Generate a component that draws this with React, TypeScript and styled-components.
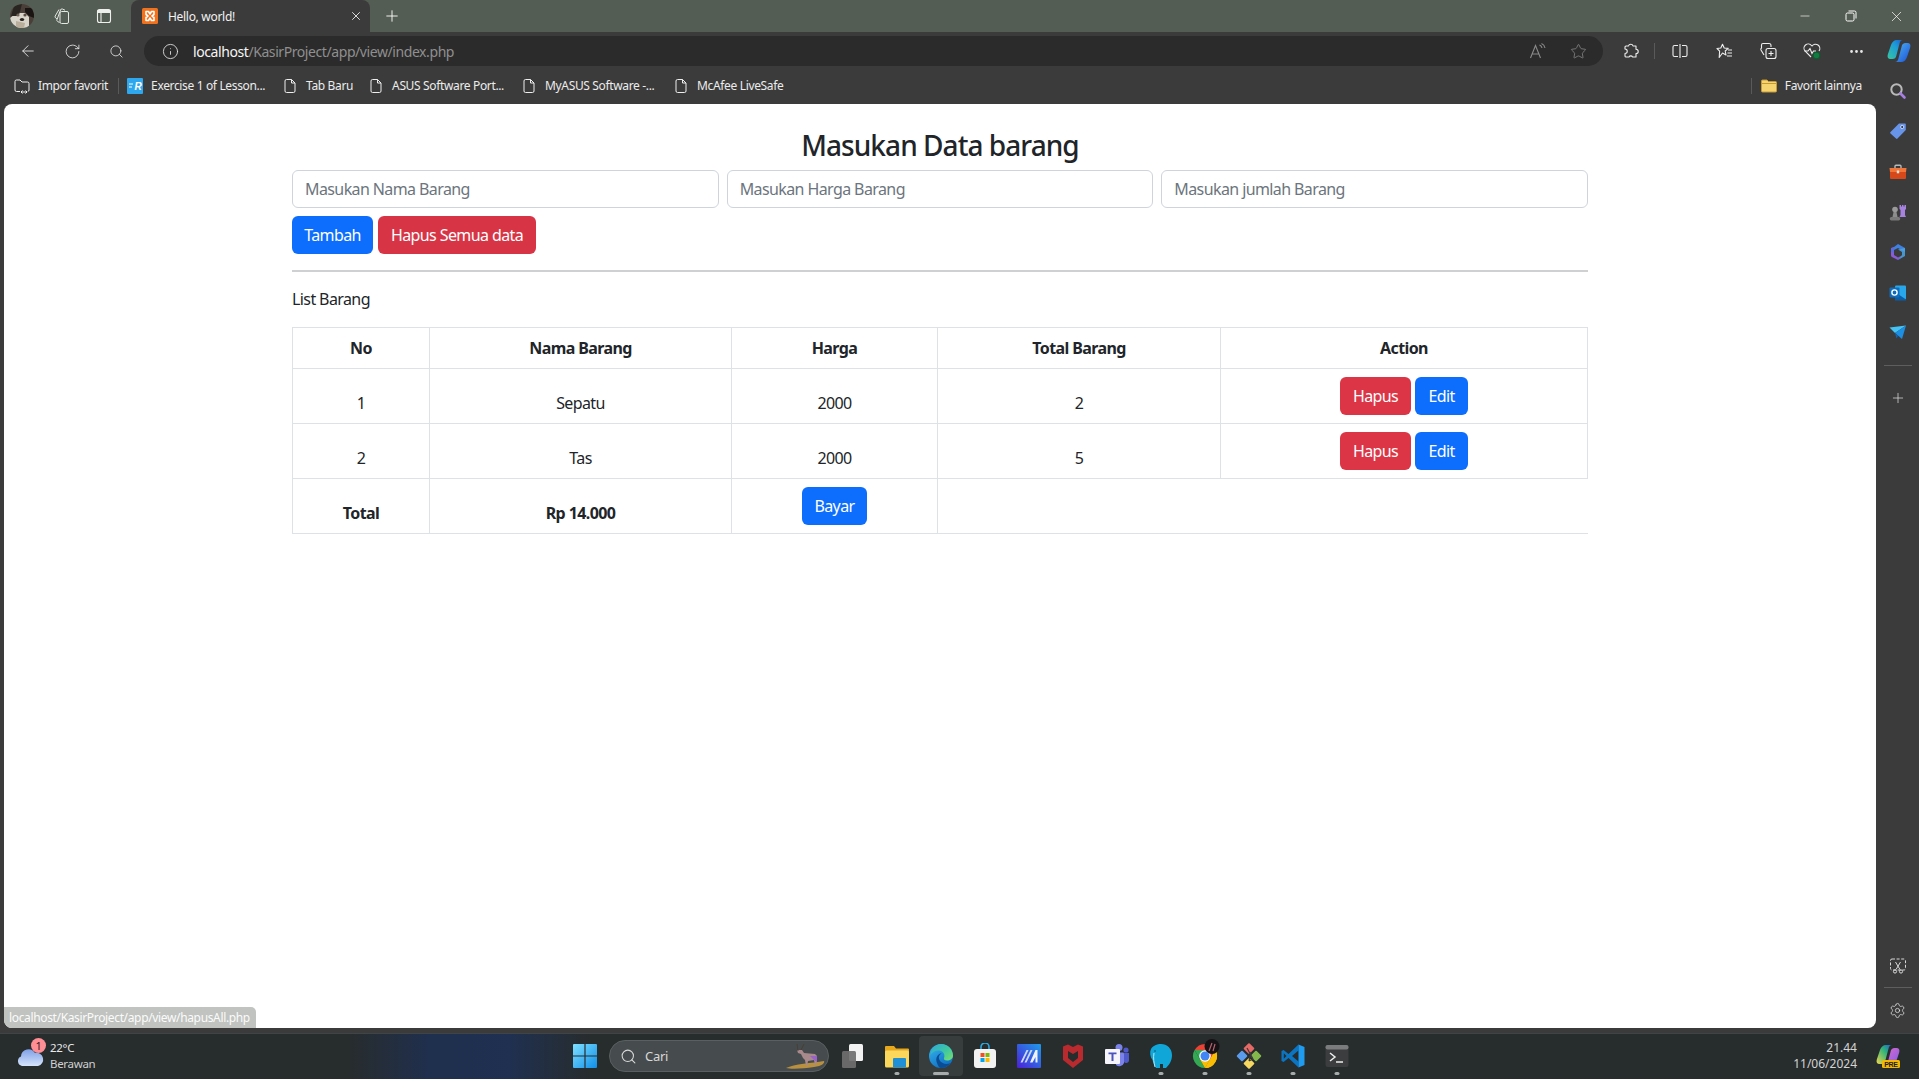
import React from 'react';
import styled, { createGlobalStyle } from 'styled-components';
import { ArrowLeft, RotateCw, Search, Info, Star, X, Plus, Minus, Settings, Ellipsis } from 'lucide-react';

const SANS = `"Noto Sans", "Open Sans", "Liberation Sans", sans-serif`;

const GlobalStyle = createGlobalStyle`
  html, body { margin: 0; padding: 0; height: 100%; overflow: hidden; background: #3b3b3b; }
  * { box-sizing: border-box; }
  body { font-family: ${SANS}; letter-spacing: -0.3px; color: #212529; }
`;

const Screen = styled.div`
  display: flex;
  flex-direction: column;
  width: 1919px;
  height: 1079px;
  background: #3b3b3b;
`;

const TabStrip = styled.div`
  display: flex;
  align-items: center;
  height: 32px;
  background: #545d53;
  color: #fff;
`;

const Slot = styled.div<{ $w?: number; $h?: number }>`
  display: flex;
  flex: none;
  align-items: center;
  justify-content: center;
  width: ${({ $w }) => $w ?? 44}px;
  height: ${({ $h }) => ($h ? `${$h}px` : '100%')};
`;

const Tab = styled.div`
  display: flex;
  flex: none;
  align-items: center;
  width: 239px;
  height: 32px;
  margin-left: 3px;
  padding: 0 7px 0 11px;
  gap: 10px;
  background: #3b3b3b;
  border-radius: 8px 8px 0 0;
  font-size: 12px;
`;

const TabTitle = styled.span`
  flex: 1;
  color: #f2f2f2;
`;

const Push = styled.div`
  flex: 1;
`;

const Toolbar = styled.div`
  display: flex;
  align-items: center;
  height: 38px;
  padding-left: 6px;
  color: #e6e6e6;
`;

const Address = styled.div`
  display: flex;
  flex: none;
  align-items: center;
  width: 1459px;
  height: 30px;
  margin: 0 6px;
  padding: 0 5px 0 8px;
  background: #2b2b2b;
  border-radius: 15px;
  font-size: 14px;
  letter-spacing: -0.42px;
`;

const UrlHost = styled.span`
  margin-left: 5px;
  color: #f5f5f5;
`;

const UrlPath = styled.span`
  color: #8f8f8f;
`;

const Divider = styled.div`
  flex: none;
  width: 1px;
  height: 16px;
  margin: 0 3px 0 1px;
  background: #5a5a5a;
`;

const Body = styled.div`
  display: flex;
  flex: 1;
  min-height: 0;
`;

const Left = styled.div`
  display: flex;
  flex: 1;
  flex-direction: column;
  min-width: 0;
`;

const Bookmarks = styled.div`
  display: flex;
  flex: none;
  align-items: center;
  height: 34px;
  padding: 0 14px 3px;
  color: #ececec;
  font-size: 12px;
  letter-spacing: -0.35px;
`;

const Bookmark = styled.div<{ $w?: number }>`
  display: flex;
  flex: none;
  align-items: center;
  gap: 8px;
  width: ${({ $w }) => ($w ? `${$w}px` : 'auto')};
  white-space: nowrap;
`;

const BarRule = styled.div<{ $ml: number; $mr: number }>`
  flex: none;
  width: 1px;
  height: 16px;
  margin-left: ${({ $ml }) => $ml}px;
  margin-right: ${({ $mr }) => $mr}px;
  background: #5a5a5a;
`;

const Page = styled.main`
  position: relative;
  flex: 1;
  margin: 0 0 5px 4px;
  background: #fff;
  border-radius: 8px;
  letter-spacing: -0.6px;
`;

const Container = styled.div`
  width: 1320px;
  margin: 0 auto;
  padding: 0 12px;
`;

const Title = styled.h3`
  margin: 0;
  padding-top: 24px;
  height: 66px;
  color: #212529;
  font-size: 28px;
  font-weight: 500;
  line-height: 34px;
  text-align: center;
  letter-spacing: -0.95px;
`;

const InputRow = styled.div`
  display: grid;
  grid-template-columns: repeat(3, 1fr);
  gap: 8px;
`;

const Field = styled.input`
  height: 38px;
  padding: 6px 12px;
  border: 1px solid #ced4da;
  border-radius: 6px;
  background: #fff;
  font-family: ${SANS};
  font-size: 16px;
  letter-spacing: -0.6px;

  &::placeholder {
    color: #6c757d;
    opacity: 1;
  }
`;

const ButtonRow = styled.div`
  display: flex;
  gap: 5px;
  margin-top: 8px;
`;

const Button = styled.button<{ $tone: 'primary' | 'danger' | 'dangerHover'; $w: number }>`
  width: ${({ $w }) => $w}px;
  height: 38px;
  padding: 0;
  border: 0;
  border-radius: 6px;
  background: ${({ $tone }) =>
    $tone === 'primary' ? '#0d6efd' : $tone === 'danger' ? '#dc3545' : '#d73546'};
  color: #fff;
  font-family: ${SANS};
  font-size: 16px;
  letter-spacing: -0.6px;
`;

const Rule = styled.hr`
  margin: 16px 0 0;
  border: 0;
  border-top: 2px solid #cfd0d1;
`;

const ListLabel = styled.p`
  margin: 15px 0 16px;
  font-size: 16px;
  line-height: 24px;
`;

const Table = styled.table`
  width: 1296px;
  table-layout: fixed;
  border-collapse: collapse;
  font-size: 16px;
`;

const Row = styled.tr`
  border-top: 1px solid #dee2e6;
  border-bottom: 1px solid #dee2e6;
`;

const Head = styled.th<{ $w?: number }>`
  width: ${({ $w }) => ($w ? `${$w}px` : 'auto')};
  padding: 8px;
  border-left: 1px solid #dee2e6;
  border-right: 1px solid #dee2e6;
  font-weight: 700;
  line-height: 24px;
  text-align: center;
`;

const Cell = styled.td<{ $bold?: boolean; $open?: boolean }>`
  padding: 8px;
  border-left: 1px solid #dee2e6;
  border-right: ${({ $open }) => ($open ? '0' : '1px solid #dee2e6')};
  font-weight: ${({ $bold }) => ($bold ? 700 : 400)};
  line-height: 24px;
  text-align: center;
  vertical-align: bottom;
`;

const Actions = styled.div`
  display: flex;
  justify-content: center;
  gap: 4px;
`;

const StatusBubble = styled.div`
  position: absolute;
  left: 0;
  bottom: 0;
  width: 252px;
  height: 21px;
  padding: 0 5px;
  background: #c0c3bf;
  border-radius: 0 5px 0 8px;
  color: #fbfbfb;
  font-size: 12px;
  line-height: 21px;
  letter-spacing: -0.35px;
  white-space: nowrap;
`;

const Sidebar = styled.aside`
  display: flex;
  flex: none;
  flex-direction: column;
  align-items: center;
  width: 43px;
  padding: 1px 0 3px;
  color: #e0e0e0;
`;

const SideRule = styled.div<{ $mt: number; $mb: number }>`
  flex: none;
  width: 28px;
  height: 1px;
  margin-top: ${({ $mt }) => $mt}px;
  margin-bottom: ${({ $mb }) => $mb}px;
  background: #5e5e5e;
`;

const SideBottom = styled.div`
  display: flex;
  flex-direction: column;
  align-items: center;
  margin-top: auto;
`;

const Taskbar = styled.footer`
  display: flex;
  flex: none;
  align-items: center;
  height: 46px;
  padding-bottom: 1px;
  border-top: 1px solid #3f4546;
  background: linear-gradient(90deg, #272c2d 0, #272c2d 350px, #1f2f4e 430px, #1f3050 510px, #272c2d 590px);
  color: #e8e8e8;
`;

const Weather = styled.div`
  display: flex;
  flex: none;
  align-items: center;
  gap: 6px;
  width: 563px;
  padding-left: 15px;
`;

const WeatherIcon = styled.div`
  position: relative;
  width: 30px;
  height: 30px;
`;

const WeatherBadge = styled.span`
  position: absolute;
  top: -3px;
  right: -1px;
  width: 15px;
  height: 15px;
  background: #ff8f95;
  border-radius: 50%;
  color: #3a1518;
  font-size: 11px;
  line-height: 15px;
  text-align: center;
`;

const WeatherText = styled.div`
  margin-left: -1px;
  font-size: 11.5px;
  line-height: 16px;
`;

const WeatherSub = styled.div`
  color: #cfcfcf;
`;

const SearchPill = styled.div`
  display: flex;
  flex: none;
  align-items: center;
  gap: 8px;
  width: 220px;
  height: 32px;
  margin: 0 2px;
  padding: 0 0 0 10px;
  background: #464c4d;
  border: 1px solid #5a6061;
  border-radius: 16px;
  color: #d8d8d8;
  font-size: 13px;
`;

const TaskItem = styled.div<{ $active?: boolean; $dot?: boolean }>`
  position: relative;
  display: flex;
  flex: none;
  align-items: center;
  justify-content: center;
  width: 44px;
  height: 40px;
  border-radius: 4px;
  background: ${({ $active }) => ($active ? 'rgba(255,255,255,0.08)' : 'transparent')};

  &::after {
    content: '';
    display: ${({ $dot, $active }) => ($dot || $active ? 'block' : 'none')};
    position: absolute;
    left: 50%;
    bottom: 1px;
    width: ${({ $active }) => ($active ? 16 : 5)}px;
    height: 3px;
    transform: translateX(-50%);
    border-radius: 2px;
    background: #a8abab;
  }
`;

const Clock = styled.div`
  flex: none;
  color: #d4d4d4;
  font-size: 12px;
  line-height: 16px;
  letter-spacing: 0;
  text-align: right;
`;

const Avatar = () => (
  <svg width="24" height="24" viewBox="0 0 24 24">
    <defs><clipPath id="av"><circle cx="12" cy="12" r="12" /></clipPath></defs>
    <g clipPath="url(#av)">
      <rect width="24" height="24" fill="#4a4039" />
      <path d="M0 24 V14 C3 11 5 11 7 12 L10 9 H15 L19 13 V24Z" fill="#d9d4ca" />
      <path d="M4 2 L12 0 L10 8 L6 12 L1 12Z" fill="#2a2420" />
      <path d="M15 4 H24 V14 L19 12 L15 8Z" fill="#1a1512" />
      <circle cx="8" cy="11" r="1.6" fill="#6f6256" />
      <circle cx="15" cy="11" r="1.6" fill="#5a4d42" />
      <ellipse cx="12" cy="15.5" rx="2.2" ry="1.6" fill="#2a2420" />
      <path d="M6 17 L15 19 L14 24 H6Z" fill="#b9ae9c" />
    </g>
  </svg>
);

const CollectionsTab = () => (
  <svg width="18" height="18" viewBox="0 0 18 18" fill="none" stroke="#e4e8e4" strokeWidth="1">
    <rect x="7" y="4.5" width="8.5" height="12" rx="1.5" />
    <path d="M6.5 15.5 L4.6 14.5 A1.5 1.5 0 0 1 4 12.6 L7.5 3 A1.5 1.5 0 0 1 9.4 2 L12 3.2" />
    <path d="M4 12 L2.5 10.8 A1.5 1.5 0 0 1 2.2 9 L6 2.5" />
  </svg>
);

const TabActions = () => (
  <svg width="16" height="16" viewBox="0 0 16 16" fill="none" stroke="#eef0ee" strokeWidth="1.1">
    <rect x="1.5" y="1.5" width="13" height="13" rx="2" />
    <path d="M1.5 3.5 H14.5" strokeWidth="3" />
    <path d="M5 5 V14.5" />
  </svg>
);

const XamppLogo = () => (
  <svg width="16" height="16" viewBox="0 0 16 16">
    <rect width="16" height="16" rx="1.5" fill="#f2711c" />
    <path d="M4 3.5 H6.5 L8 6 L9.5 3.5 H12 V6.5 L10 8 L12 9.5 V12.5 H9.5 L8 10 L6.5 12.5 H4 V9.5 L6 8 L4 6.5Z" fill="none" stroke="#fff" strokeWidth="1.6" strokeLinejoin="round" />
  </svg>
);

const ReadAloud = () => (
  <svg width="18" height="18" viewBox="0 0 18 18" fill="none" stroke="#8a8a8a" strokeWidth="1.1">
    <path d="M1.5 16 L6.5 3.5 L11.5 16 M3.2 12 H9.8" />
    <path d="M10.5 3 A4 4 0 0 1 13 6 M12.5 1.5 A6 6 0 0 1 16 6" />
  </svg>
);

const Puzzle = () => (
  <svg width="16" height="16" viewBox="0 0 16 16" fill="none" stroke="#eee" strokeWidth="1.1" strokeLinejoin="round">
    <path d="M5.5 3 A2.3 2.3 0 0 1 10 3 H13 V6.2 A2.2 2.2 0 0 1 13 10.6 V14 H9.6 A2 2 0 0 0 6 14 H2.8 A1 1 0 0 1 2 13 V10.5 A2.2 2.2 0 0 0 2 6 V4 A1 1 0 0 1 3 3Z" />
  </svg>
);

const SplitScreen = () => (
  <svg width="16" height="16" viewBox="0 0 16 16" fill="none" stroke="#eee" strokeWidth="1.1">
    <path d="M6 2.5 H2.5 A1.5 1.5 0 0 0 1 4 V12 A1.5 1.5 0 0 0 2.5 13.5 H6" />
    <path d="M10 2.5 H13.5 A1.5 1.5 0 0 1 15 4 V12 A1.5 1.5 0 0 1 13.5 13.5 H10" />
    <path d="M8 1 V15" />
  </svg>
);

const FavoritesIcon = () => (
  <svg width="17" height="16" viewBox="0 0 17 16" fill="none" stroke="#eee" strokeWidth="1.1" strokeLinejoin="round">
    <path d="M6.5 1.2 L8.2 5 L12.2 5.4 L9.2 8 L10 12 L6.5 10 L3.2 14.5 L3.6 8.2 L1 5.5 L4.8 5Z" />
    <path d="M12 7 H16 M11.5 10 H16 M11 13 H16" />
  </svg>
);

const CollectionsAdd = () => (
  <svg width="18" height="18" viewBox="0 0 18 18" fill="none" stroke="#eee" strokeWidth="1.1">
    <rect x="7" y="6.5" width="10" height="10" rx="2" />
    <path d="M12 9 V14 M9.5 11.5 H14.5" />
    <path d="M5 13 L2 8 A1.5 1.5 0 0 1 2.5 6 L2.5 3 A1.5 1.5 0 0 1 4 1.5 H10 A2 2 0 0 1 12 3.5 V5" />
  </svg>
);

const Health = () => (
  <svg width="18" height="18" viewBox="0 0 18 18" fill="none" stroke="#eee" strokeWidth="1.1">
    <path d="M8 15 L2 9 A4 4 0 0 1 8.5 3.5 L9 4 A4 4 0 0 1 16 9" />
    <path d="M1.5 9 H5 L7 6.5 L9 11.5 L10.5 9 H13" />
    <circle cx="13.5" cy="13.5" r="3.3" fill="#107c41" stroke="#0c5c30" />
  </svg>
);

const CopilotMark = ({ pre }: { pre?: boolean }) => (
  <svg width="24" height="24" viewBox="0 0 24 24">
    <defs>
      <linearGradient id={pre ? 'cpa' : 'cpb'} x1="0" y1="1" x2="1" y2="0">
        <stop offset="0" stopColor={pre ? '#f2d64b' : '#37c7a0'} />
        <stop offset="0.6" stopColor={pre ? '#2fb47a' : '#1d9cd8'} />
        <stop offset="1" stopColor="#1a5fd6" />
      </linearGradient>
      <linearGradient id={pre ? 'cpc' : 'cpd'} x1="0" y1="0" x2="1" y2="1">
        <stop offset="0" stopColor={pre ? '#e36bd0' : '#4cb8f0'} />
        <stop offset="1" stopColor={pre ? '#7a5ce0' : '#1d4fd8'} />
      </linearGradient>
    </defs>
    <path d="M10 1 H16 C14 1 13 2.5 12.4 5 L9.5 16 C9 19 7.5 20 5.5 20 H3.5 C1 20 0 18 0.8 15.5 L4 6 C5 3 7 1 10 1Z" fill={`url(#${pre ? 'cpa' : 'cpb'})`} />
    <path d="M14 23 H8 C10 23 11 21.5 11.6 19 L14.5 8 C15 5 16.5 4 18.5 4 H20.5 C23 4 24 6 23.2 8.5 L20 18 C19 21 17 23 14 23Z" fill={`url(#${pre ? 'cpc' : 'cpd'})`} />
    {pre && <rect x="6" y="16" width="18" height="8" rx="1.5" fill="#f5b800" />}
    {pre && <text x="15" y="22.6" fontSize="7" fontWeight="700" fill="#222" textAnchor="middle" fontFamily="Liberation Sans, sans-serif">PRE</text>}
  </svg>
);

const ImportIcon = () => (
  <svg width="16" height="16" viewBox="0 0 16 16" fill="none" stroke="#eee" strokeWidth="1">
    <path d="M6 13.5 H2.5 A1.5 1.5 0 0 1 1 12 V3.5 A1.5 1.5 0 0 1 2.5 2 H6 L8 4 H13.5 A1.5 1.5 0 0 1 15 5.5 V12 A1.5 1.5 0 0 1 13.8 13.5" />
    <path d="M7 14 H13 M8.5 12.5 L7 14 L8.5 15.5 M11.5 12.5 L13 14 L11.5 15.5" />
  </svg>
);

const ExerciseIcon = () => (
  <svg width="16" height="16" viewBox="0 0 16 16">
    <rect width="16" height="16" rx="1" fill="#2ea7ee" />
    <path d="M2 6 H6 M2 9 H5" stroke="#fff" strokeWidth="1" />
    <text x="11" y="11.5" fontSize="10" fontWeight="700" fontStyle="italic" fill="#fff" textAnchor="middle" fontFamily="Liberation Sans, sans-serif">R</text>
  </svg>
);

const DocIcon = () => (
  <svg width="16" height="16" viewBox="0 0 16 16" fill="none" stroke="#eee" strokeWidth="1">
    <path d="M4.5 1.5 H9.5 L13 5 V13 A1.5 1.5 0 0 1 11.5 14.5 H4.5 A1.5 1.5 0 0 1 3 13 V3 A1.5 1.5 0 0 1 4.5 1.5Z" />
    <path d="M9.5 1.5 V5 H13" />
  </svg>
);

const FolderIcon = () => (
  <svg width="16" height="16" viewBox="0 0 16 16">
    <path d="M0.5 3 A1 1 0 0 1 1.5 2 H6 L7.5 3.5 H14.5 A1 1 0 0 1 15.5 4.5 V13 A1 1 0 0 1 14.5 14 H1.5 A1 1 0 0 1 0.5 13Z" fill="#f6d470" stroke="#c8992e" strokeWidth="1" />
    <path d="M1 5.5 H15" stroke="#c8992e" strokeWidth="1" />
  </svg>
);

const SideSearch = () => (
  <svg width="18" height="18" viewBox="0 0 18 18" fill="none">
    <circle cx="7.5" cy="7.5" r="5.2" stroke="#b9b9b9" strokeWidth="2" />
    <path d="M11.5 11.5 L15.5 15.5" stroke="#a77fe0" strokeWidth="2.6" strokeLinecap="round" />
  </svg>
);

const SideTag = () => (
  <svg width="18" height="18" viewBox="0 0 18 18">
    <path d="M1.5 10 L10 1.5 H16 A0.8 0.8 0 0 1 16.8 2.3 V8 L8.5 16.5 A1 1 0 0 1 7 16.5 L1.5 11.5 A1 1 0 0 1 1.5 10Z" fill="#6793e8" />
    <circle cx="13.2" cy="5" r="1.6" fill="#2c3d66" stroke="#e8eefc" strokeWidth="0.8" />
  </svg>
);

const SideToolbox = () => (
  <svg width="18" height="16" viewBox="0 0 18 16">
    <path d="M6 4 V2.2 A1 1 0 0 1 7 1.2 H11 A1 1 0 0 1 12 2.2 V4" fill="none" stroke="#b9b9b9" strokeWidth="1.4" />
    <path d="M0.5 4 H17.5 L17 8 H1Z" fill="#f0763a" />
    <path d="M1 8 H17 V14 A1 1 0 0 1 16 15 H2 A1 1 0 0 1 1 14Z" fill="#d6481a" />
    <rect x="7.8" y="6.5" width="2.4" height="2.8" fill="#e6e6e6" />
  </svg>
);

const SideChess = () => (
  <svg width="18" height="18" viewBox="0 0 18 18">
    <path d="M10.5 2 H12 V3.5 H13 V2 H14.5 V3.5 H15.5 V2 H17 V6 L16 7 V12 L17 14 H10.5 L11.5 12 V7 L10.5 6Z" fill="#a783e0" />
    <circle cx="6" cy="6.5" r="2.8" fill="#9a9a9a" />
    <path d="M4.5 9 H7.5 L8.5 14 H3.5Z" fill="#8d8d8d" />
    <rect x="0.8" y="14" width="10.4" height="3.4" rx="1.6" fill="#7a7a7a" />
  </svg>
);

const SideM365 = () => (
  <svg width="18" height="18" viewBox="0 0 18 18">
    <path d="M9 1 L16 5 V9 L9 5 L5 7 V4Z" fill="#3f7fe0" />
    <path d="M2 5 L5 4 V12 L9 14.5 L13 12.5 L9 17 L3 14 A2 2 0 0 1 2 12.5Z" fill="#8a5bd8" />
    <path d="M16 5 V13 L9 17 L13 12 V9 L9 6.5Z" fill="#4aa6e8" opacity="0.85" />
    <path d="M2 5.5 L5 4 V10 L2 9Z" fill="#5a6be0" />
  </svg>
);

const SideOutlook = () => (
  <svg width="18" height="18" viewBox="0 0 18 18">
    <rect x="6" y="1.5" width="11" height="14" rx="1" fill="#28a8ea" />
    <path d="M6 8 L17 15.5 V16.5 H6Z" fill="#0a5ea8" />
    <rect x="0.5" y="3.5" width="10" height="10" rx="1" fill="#0f6cbd" />
    <circle cx="5.5" cy="8.5" r="2.6" fill="none" stroke="#fff" strokeWidth="1.4" />
  </svg>
);

const SideSend = () => (
  <svg width="18" height="18" viewBox="0 0 18 18">
    <path d="M0.5 3.5 L17 1.5 L6 9Z" fill="#45c3f5" />
    <path d="M17 1.5 L6 9 L13 15Z" fill="#1c8fe3" />
    <path d="M6 9 L9 12 L7.5 14.5Z" fill="#0e66bb" />
  </svg>
);

const SideCapture = () => (
  <svg width="18" height="18" viewBox="0 0 18 18" fill="none" stroke="#d8d8d8" strokeWidth="1">
    <rect x="1.5" y="2" width="15" height="11" rx="1.5" strokeDasharray="3 1.6" />
    <path d="M6.5 5 L11 12.5 M11.5 5 L7 12.5" />
    <circle cx="6" cy="14.5" r="1.6" />
    <circle cx="12" cy="14.5" r="1.6" />
  </svg>
);

const CloudIcon = () => (
  <svg width="30" height="30" viewBox="0 0 30 30">
    <defs>
      <linearGradient id="cl" x1="0" y1="0" x2="0" y2="1">
        <stop offset="0" stopColor="#7ea0e8" />
        <stop offset="1" stopColor="#d6e4fb" />
      </linearGradient>
    </defs>
    <path d="M7 25 A5 5 0 0 1 6 15.5 A7.5 7.5 0 0 1 20 12 A6.5 6.5 0 0 1 23 25Z" fill="url(#cl)" />
  </svg>
);

const WindowsLogo = () => (
  <svg width="24" height="24" viewBox="0 0 24 24">
    <defs>
      <linearGradient id="wn" x1="0" y1="0" x2="1" y2="1">
        <stop offset="0" stopColor="#7fe0ff" />
        <stop offset="1" stopColor="#0f8fe8" />
      </linearGradient>
    </defs>
    <path d="M0 1 A1 1 0 0 1 1 0 H11.4 V11.4 H0Z M12.6 0 H23 A1 1 0 0 1 24 1 V11.4 H12.6Z M0 12.6 H11.4 V24 H1 A1 1 0 0 1 0 23Z M12.6 12.6 H24 V23 A1 1 0 0 1 23 24 H12.6Z" fill="url(#wn)" />
  </svg>
);

const Antelope = () => (
  <svg width="44" height="30" viewBox="0 0 44 30">
    <path d="M2 27 C10 23 28 22 40 20 C41 22 38 25 30 26 C20 27.5 8 28.5 2 27Z" fill="#b8903f" />
    <path d="M13 9 L18 9 L20 12 L31 13 L33 15 L33 20 L32 24 L31 24 L30 19 L24 20 L23 25 L22 25 L21 19 L19 17 L17 13 L14 12Z" fill="#a98a8c" />
    <path d="M26 15 L33 15 L33 21 L30 19 Z" fill="#9a62c8" />
    <path d="M14 10 L13 3 M17 9 L20 3" stroke="#4a3c32" strokeWidth="0.9" />
  </svg>
);

const Squares = () => (
  <svg width="26" height="26" viewBox="0 0 26 26">
    <rect x="9" y="1" width="14" height="17" rx="1.5" fill="#f2f2f2" />
    <rect x="2" y="8" width="14" height="17" rx="1.5" fill="#6f6f6f" fillOpacity="0.92" />
  </svg>
);

const Explorer = () => (
  <svg width="26" height="26" viewBox="0 0 26 26">
    <path d="M1 4 A1 1 0 0 1 2 3 H10 L12 5.5 H24 A1 1 0 0 1 25 6.5 V9 H1Z" fill="#e8a81e" />
    <rect x="1" y="7.5" width="24" height="17" rx="1.5" fill="#fbd75b" />
    <rect x="9" y="15" width="13" height="9.5" rx="1" fill="#1f8fd6" />
  </svg>
);

const EdgeLogo = () => (
  <svg width="26" height="26" viewBox="0 0 26 26">
    <defs>
      <linearGradient id="eg" x1="0" y1="0" x2="0.6" y2="1">
        <stop offset="0" stopColor="#38b8ee" />
        <stop offset="1" stopColor="#0f6fc4" />
      </linearGradient>
      <linearGradient id="eh" x1="0" y1="0" x2="1" y2="1">
        <stop offset="0" stopColor="#2ea8d8" />
        <stop offset="0.55" stopColor="#3fc8a0" />
        <stop offset="1" stopColor="#7be06a" />
      </linearGradient>
    </defs>
    <circle cx="13" cy="13" r="12" fill="url(#eg)" />
    <path d="M13 1 C20 1 25 6.5 25 12.5 C25 16 22 17.5 19 17.5 C16.5 17.5 15.5 16.3 16 15 C17 12.5 16 9 13 8 C9 6.7 4.5 8.5 2.5 12 C3 6 7.5 1 13 1Z" fill="url(#eh)" />
    <path d="M9 20 C7 15 9.5 10.5 14 10.2 C11 11.5 10.2 14.5 11.5 17 C13.5 20.5 18 22 22.5 20 C20 23.5 16.5 25 13 25 C11.5 25 10 23 9 20Z" fill="#0b4d94" />
  </svg>
);

const StoreLogo = () => (
  <svg width="24" height="26" viewBox="0 0 24 26">
    <path d="M8 7 V4 A4 4 0 0 1 16 4 V7" fill="none" stroke="#2aa8e0" strokeWidth="1.6" />
    <rect x="1" y="6" width="22" height="19" rx="3" fill="#f2f2f2" />
    <rect x="7.5" y="10" width="4" height="4" fill="#f25022" />
    <rect x="12.5" y="10" width="4" height="4" fill="#7fba00" />
    <rect x="7.5" y="15" width="4" height="4" fill="#00a4ef" />
    <rect x="12.5" y="15" width="4" height="4" fill="#ffb900" />
  </svg>
);

const VivaLogo = () => (
  <svg width="24" height="24" viewBox="0 0 24 24">
    <defs>
      <linearGradient id="vv" x1="1" y1="0" x2="0" y2="1">
        <stop offset="0" stopColor="#1f9be8" />
        <stop offset="1" stopColor="#4c1fd8" />
      </linearGradient>
    </defs>
    <rect width="24" height="24" rx="1" fill="url(#vv)" />
    <path d="M3.5 18.5 L9.5 6 H11.5 L5.5 18.5Z M7.5 18.5 L13.5 6 H15.5 L9.5 18.5Z" fill="#c9d8fb" />
    <path d="M13 18.5 L18.5 6 H20.5 V18.5 H18.5 V13 L15.5 18.5Z" fill="#eef3ff" />
  </svg>
);

const McAfeeLogo = () => (
  <svg width="22" height="26" viewBox="0 0 22 26">
    <path d="M11 4 L16 1.5 L21 3.5 V17 L11 25 L1 17 V3.5 L6 1.5Z M6 8 V15 L11 19 L16 15 V8 L11 11Z" fill="#b92a2e" fillRule="evenodd" />
  </svg>
);

const TeamsLogo = () => (
  <svg width="26" height="26" viewBox="0 0 26 26">
    <circle cx="15" cy="4.5" r="3.5" fill="#7b83eb" />
    <circle cx="22" cy="7" r="2.6" fill="#5059c9" />
    <path d="M12 9.5 H19 A1 1 0 0 1 20 10.5 V20 A5 5 0 0 1 12 22Z" fill="#7b83eb" />
    <path d="M20 10 H25 V18 A3 3 0 0 1 20 19Z" fill="#5059c9" />
    <rect x="1" y="6" width="15" height="15" rx="1" fill="#f5f5fb" />
    <path d="M4.5 9.5 H12.5 V11.3 H9.5 V18 H7.5 V11.3 H4.5Z" fill="#4b53bc" />
  </svg>
);

const ElephantLogo = () => (
  <svg width="24" height="28" viewBox="0 0 24 28">
    <path d="M12 2 C18 2 23 6.5 23 13 C23 19 20 23 17 26 H14 V22 H11 V26 H7 C5 23 4 20 3.5 18 C1 15 0.5 10 2 7 C4 3.5 8 2 12 2Z" fill="#11a6d8" />
    <path d="M5 11 C4 16 5 21 6 25" fill="none" stroke="#bfe8f5" strokeWidth="1" />
    <circle cx="6" cy="9" r="0.8" fill="#05546f" />
  </svg>
);

const ChromeLogo = () => (
  <svg width="24" height="24" viewBox="0 0 24 24" overflow="visible">
    <path d="M12 0 A12 12 0 0 1 22.4 6 L12 6 L1.6 6 A12 12 0 0 1 12 0Z" fill="#ea4335" />
    <path d="M1.6 6 L12 24 A12 12 0 0 1 1.6 6Z" fill="#34a853" />
    <path d="M22.4 6 A12 12 0 0 1 12 24 L17.2 15Z" fill="#fbbc04" />
    <path d="M1.6 6 L6.8 15 L12 24 L17.2 15 L22.4 6Z" fill="#34a853" />
    <path d="M12 6 H22.4 L17.2 15Z" fill="#ea4335" />
    <path d="M17.2 15 L22.4 6 A12 12 0 0 1 12 24Z" fill="#fbbc04" />
    <path d="M6.8 15 L17.2 15 L12 24Z" fill="#fbbc04" />
    <circle cx="12" cy="12" r="5.8" fill="#fff" />
    <circle cx="12" cy="12" r="4.5" fill="#4285f4" />
    <circle cx="19" cy="2.5" r="7.5" fill="#141214" />
    <path d="M16 7 L19 -1 M20 7 L22 0" stroke="#b9606c" strokeWidth="1.2" />
  </svg>
);

const GitLogo = () => (
  <svg width="26" height="26" viewBox="0 0 26 26">
    <rect x="9" y="1.5" width="8" height="8" rx="1" transform="rotate(45 13 5.5)" fill="#e56a66" />
    <rect x="16" y="9" width="8" height="8" rx="1" transform="rotate(45 20 13)" fill="#84b84c" />
    <rect x="2" y="9" width="8" height="8" rx="1" transform="rotate(45 6 13)" fill="#5b9bec" />
    <rect x="9" y="16.5" width="8" height="8" rx="1" transform="rotate(45 13 20.5)" fill="#f6d860" />
    <path d="M11 5 L17 16 M15 9 L13 18 M17 16 L13 18" stroke="#3a3a3a" strokeWidth="1.2" fill="none" />
  </svg>
);

const VsCodeLogo = () => (
  <svg width="24" height="24" viewBox="0 0 24 24">
    <path d="M17.5 0.5 L7.5 10 L2.6 6 L0.5 7 V17 L2.6 18 L7.5 14 L17.5 23.5 V17.5 L11 12 L17.5 6.5Z M2.8 9.2 V14.8 L5.5 12Z" fill="#0b75c2" fillRule="evenodd" />
    <path d="M17.5 0.5 L23.5 3 V21 L17.5 23.5Z" fill="#1f9cf0" />
  </svg>
);

const TerminalLogo = () => (
  <svg width="24" height="24" viewBox="0 0 24 24">
    <rect x="0.5" y="1" width="23" height="22" rx="2" fill="#3b3d3e" />
    <rect x="0.5" y="1" width="23" height="4.5" rx="2" fill="#7a7c7d" />
    <path d="M5 9 L10 13 L5 17" fill="none" stroke="#eee" strokeWidth="1.5" />
    <path d="M11 18 H18" stroke="#eee" strokeWidth="1.5" />
  </svg>
);

const BOOKMARKS = [
  { label: 'Exercise 1 of Lesson...', icon: <ExerciseIcon />, width: 155 },
  { label: 'Tab Baru', icon: <DocIcon />, width: 86 },
  { label: 'ASUS Software Port...', icon: <DocIcon />, width: 153 },
  { label: 'MyASUS Software -...', icon: <DocIcon />, width: 152 },
  { label: 'McAfee LiveSafe', icon: <DocIcon /> },
];

const SIDE_ICONS = [<SideSearch />, <SideTag />, <SideToolbox />, <SideChess />, <SideM365 />, <SideOutlook />, <SideSend />];

const TASK_ITEMS = [
  { icon: <Squares /> },
  { icon: <Explorer />, dot: true },
  { icon: <EdgeLogo />, active: true },
  { icon: <StoreLogo /> },
  { icon: <VivaLogo /> },
  { icon: <McAfeeLogo /> },
  { icon: <TeamsLogo /> },
  { icon: <ElephantLogo />, dot: true },
  { icon: <ChromeLogo />, dot: true },
  { icon: <GitLogo />, dot: true },
  { icon: <VsCodeLogo />, dot: true },
  { icon: <TerminalLogo />, dot: true },
];

const ITEMS = [
  { no: 1, name: 'Sepatu', price: 2000, total: 2 },
  { no: 2, name: 'Tas', price: 2000, total: 5 },
];

export default function App() {
  return (
    <Screen>
      <GlobalStyle />
      <TabStrip>
        <Slot><Avatar /></Slot>
        <Slot $w={36}><CollectionsTab /></Slot>
        <Slot $w={48}><TabActions /></Slot>
        <Tab>
          <XamppLogo />
          <TabTitle>Hello, world!</TabTitle>
          <X size={14} strokeWidth={1.4} />
        </Tab>
        <Slot><Plus size={18} strokeWidth={1.2} /></Slot>
        <Push />
        <Slot $w={46}><Minus size={14} strokeWidth={1.1} /></Slot>
        <Slot $w={46}>
          <svg width="12" height="12" viewBox="0 0 12 12" fill="none" stroke="#fff" strokeWidth="1">
            <rect x="1" y="3" width="8" height="8" rx="1.5" />
            <path d="M3.5 1 H9.5 A1.5 1.5 0 0 1 11 2.5 V8.5" />
          </svg>
        </Slot>
        <Slot $w={45}><X size={17} strokeWidth={1} /></Slot>
      </TabStrip>

      <Toolbar>
        <Slot><ArrowLeft size={18} strokeWidth={1.2} /></Slot>
        <Slot><RotateCw size={17} strokeWidth={1.2} /></Slot>
        <Slot><Search size={15} strokeWidth={1.3} /></Slot>
        <Address>
          <Slot $w={36}><Info size={17} strokeWidth={1.2} /></Slot>
          <UrlHost>localhost</UrlHost>
          <UrlPath>/KasirProject/app/view/index.php</UrlPath>
          <Push />
          <Slot $w={40}><ReadAloud /></Slot>
          <Slot $w={40}><Star size={17} strokeWidth={1.1} color="#8a8a8a" /></Slot>
        </Address>
        <Slot><Puzzle /></Slot>
        <Divider />
        <Slot><SplitScreen /></Slot>
        <Slot><FavoritesIcon /></Slot>
        <Slot><CollectionsAdd /></Slot>
        <Slot><Health /></Slot>
        <Slot><Ellipsis size={17} strokeWidth={2} /></Slot>
        <Slot $w={41}><CopilotMark /></Slot>
      </Toolbar>

      <Body>
        <Left>
          <Bookmarks>
            <Bookmark><ImportIcon />Impor favorit</Bookmark>
            <BarRule $ml={10} $mr={8} />
            {BOOKMARKS.map(b => (
              <Bookmark key={b.label} $w={b.width}>{b.icon}{b.label}</Bookmark>
            ))}
            <Push />
            <BarRule $ml={0} $mr={9} />
            <Bookmark><FolderIcon />Favorit lainnya</Bookmark>
          </Bookmarks>

          <Page>
            <Container>
              <Title>Masukan Data barang</Title>
              <InputRow>
                <Field placeholder="Masukan Nama Barang" />
                <Field placeholder="Masukan Harga Barang" />
                <Field placeholder="Masukan jumlah Barang" />
              </InputRow>
              <ButtonRow>
                <Button $tone="primary" $w={81}>Tambah</Button>
                <Button $tone="dangerHover" $w={158}>Hapus Semua data</Button>
              </ButtonRow>
              <Rule />
              <ListLabel>List Barang</ListLabel>
              <Table>
                <thead>
                  <Row>
                    <Head $w={137}>No</Head>
                    <Head $w={302}>Nama Barang</Head>
                    <Head $w={206}>Harga</Head>
                    <Head $w={283}>Total Barang</Head>
                    <Head>Action</Head>
                  </Row>
                </thead>
                <tbody>
                  {ITEMS.map(item => (
                    <Row key={item.no}>
                      <Cell>{item.no}</Cell>
                      <Cell>{item.name}</Cell>
                      <Cell>{item.price}</Cell>
                      <Cell>{item.total}</Cell>
                      <Cell>
                        <Actions>
                          <Button $tone="danger" $w={71}>Hapus</Button>
                          <Button $tone="primary" $w={53}>Edit</Button>
                        </Actions>
                      </Cell>
                    </Row>
                  ))}
                  <Row>
                    <Cell $bold>Total</Cell>
                    <Cell $bold>Rp 14.000</Cell>
                    <Cell><Button $tone="primary" $w={65}>Bayar</Button></Cell>
                    <Cell $open colSpan={2} />
                  </Row>
                </tbody>
              </Table>
            </Container>
            <StatusBubble>localhost/KasirProject/app/view/hapusAll.php</StatusBubble>
          </Page>
        </Left>

        <Sidebar>
          {SIDE_ICONS.map((icon, i) => (
            <Slot key={i} $w={43} $h={40.3}>{icon}</Slot>
          ))}
          <SideRule $mt={12} $mb={12} />
          <Slot $w={43} $h={40}><Plus size={16} strokeWidth={1.1} /></Slot>
          <SideBottom>
            <Slot $w={43} $h={40}><SideCapture /></Slot>
            <SideRule $mt={1} $mb={2} />
            <Slot $w={43} $h={40}><Settings size={17} strokeWidth={1.1} /></Slot>
          </SideBottom>
        </Sidebar>
      </Body>

      <Taskbar>
        <Weather>
          <WeatherIcon>
            <CloudIcon />
            <WeatherBadge>1</WeatherBadge>
          </WeatherIcon>
          <WeatherText>
            22°C
            <WeatherSub>Berawan</WeatherSub>
          </WeatherText>
        </Weather>
        <Slot><WindowsLogo /></Slot>
        <SearchPill>
          <Search size={17} strokeWidth={1.5} />
          Cari
          <Push />
          <Antelope />
        </SearchPill>
        {TASK_ITEMS.map((t, i) => (
          <TaskItem key={i} $dot={t.dot} $active={t.active}>{t.icon}</TaskItem>
        ))}
        <Push />
        <Clock>21.44<br />11/06/2024</Clock>
        <Slot $w={62}><CopilotMark pre /></Slot>
      </Taskbar>
    </Screen>
  );
}
